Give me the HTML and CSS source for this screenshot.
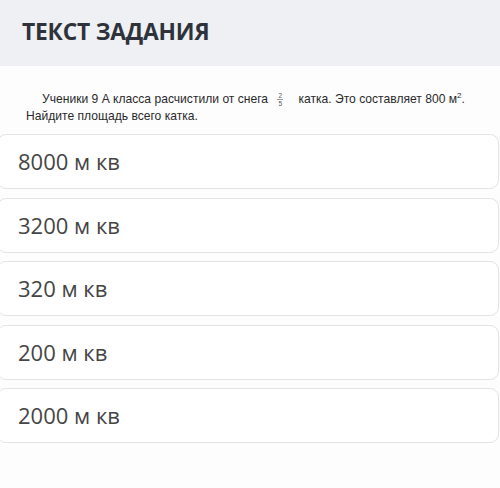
FILE: index.html
```html
<!DOCTYPE html>
<html lang="ru">
<head>
<meta charset="utf-8">
<link rel="stylesheet" href="styles.css">
</head>
<body>
<div class="header"><h1 class="title">ТЕКСТ ЗАДАНИЯ</h1></div>
<div class="task">
  <p class="question">Ученики 9 А класса расчистили от снега <span class="frac"><span class="num">2</span><span class="den">5</span></span> катка. Это составляет 800 м<sup>2</sup>. Найдите площадь всего катка.</p>
</div>
<div class="options">
  <div class="option">8000 м кв</div>
  <div class="option">3200 м кв</div>
  <div class="option">320 м кв</div>
  <div class="option">200 м кв</div>
  <div class="option">2000 м кв</div>
</div>
</body>
</html>
```
FILE: styles.css
```css
html, body { margin: 0; padding: 0; background: #fdfdfd; overflow: hidden; }
body { width: 500px; height: 488px; font-family: "Open Sans", sans-serif; }
.header { background: #eff0f4; height: 66px; display: flex; align-items: center; padding-left: 22px; box-sizing: border-box; }
.title { margin: 0; font-size: 22.8px; font-weight: 700; color: #2e333b; letter-spacing: -0.2px; line-height: 1; padding-bottom: 2px; }
.task { padding: 25px 10px 0 26px; height: 68px; box-sizing: border-box; }
.question { margin: 0; font-family: "Liberation Sans", Arial, sans-serif; font-size: 12.1px; line-height: 17px; color: #2a2a2a; text-indent: 16px; }
.frac { display: inline-flex; flex-direction: column; align-items: center; vertical-align: middle; font-size: 6.5px; line-height: 7px; margin: 0 12px 0 6px; text-indent: 0; color: #555; }
.frac .num { border-bottom: 0.5px solid #999; padding: 0 1px; }
sup { font-size: 8px; line-height: 0; vertical-align: 0; position: relative; top: -5px; }
.options { display: flex; flex-direction: column; gap: 8.5px; margin-left: -3px; width: 502px; }
.option { height: 55px; box-sizing: border-box; border: 1.5px solid #e3e3e3; border-radius: 9px; background: #fff; display: flex; align-items: center; padding-left: 20px; font-size: 22px; color: #454545; padding-bottom: 1px; }
```
